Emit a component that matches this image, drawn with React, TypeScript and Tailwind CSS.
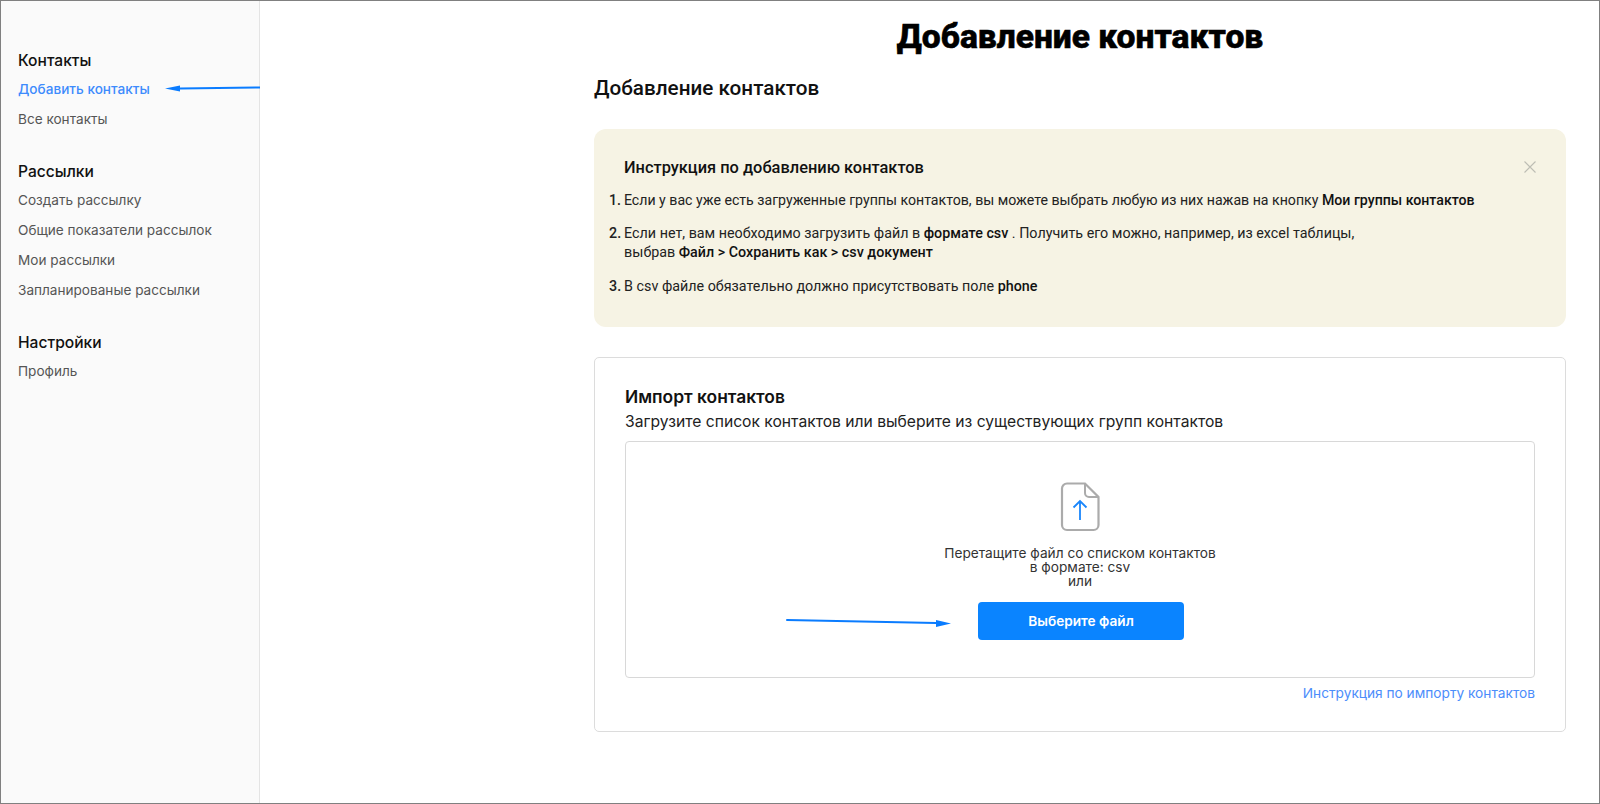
export default function App() {
  const groups = [
    { title: "Контакты", items: ["Добавить контакты", "Все контакты"] },
    { title: "Рассылки", items: ["Создать рассылку", "Общие показатели рассылок", "Мои рассылки", "Запланированые рассылки"] },
    { title: "Настройки", items: ["Профиль"] },
  ];
  return (
    <div className="relative w-[1600px] h-[804px] overflow-hidden bg-white border border-[#808080] flex font-['Inter','Noto_Sans',sans-serif] text-[#111]">
      <aside className="w-[259px] shrink-0 bg-[#fafafa] border-r border-[#e4e4e4] pl-[17px] pt-[50px] flex flex-col gap-[28px]">
        {groups.map((g) => (
          <div key={g.title} className="flex flex-col">
            <div className="text-[15.6px] leading-[20px] font-medium text-[#111] mb-[4px]">{g.title}</div>
            {g.items.map((it) => (
              <div key={it} className={"text-[13.6px] leading-[29.7px] " + (it === "Добавить контакты" ? "text-[#3d8bfd] font-medium" : "text-[#555]")}>
                {it}
              </div>
            ))}
          </div>
        ))}
      </aside>

      <main className="flex-1 pl-[334px] pr-[33px] flex flex-col">
        <h1 className="text-center font-['Roboto',sans-serif] font-extrabold text-[33.6px] leading-[40px] mt-[16px] text-black [-webkit-text-stroke:0.6px_black]">
          Добавление контактов
        </h1>
        <h2 className="font-['Roboto',sans-serif] font-medium text-[20.7px] leading-[24px] mt-[19px] text-[#111]">Добавление контактов</h2>

        <section className="relative mt-[29px] h-[198px] bg-[#f6f3e4] rounded-[12px] pl-[30px] pr-[30px] pt-[29px]">
          <button className="absolute right-[29px] top-[31px] text-[#bdbdb4]">
            <svg width="14" height="14" viewBox="0 0 14 14" fill="none" stroke="currentColor" strokeWidth="1.1">
              <path d="M1.5 1.5 L12.5 12.5 M12.5 1.5 L1.5 12.5" />
            </svg>
          </button>
          <div className="font-['Roboto',sans-serif] font-medium text-[16.4px] leading-[20px] text-[#111]">Инструкция по добавлению контактов</div>
          <ol className="font-['Roboto',sans-serif] text-[14.15px] text-[#222] mt-[13px] -ml-[15px] list-none">
            <li className="leading-[19px] flex gap-[3px]">
              <span className="font-medium">1.</span>
              <span>
                Если у вас уже есть загруженные группы контактов, вы можете выбрать любую из них нажав на кнопку <b className="font-medium text-[#111]">Мои группы контактов</b>
              </span>
            </li>
            <li className="leading-[19px] flex gap-[3px] mt-[14px] text-[14.3px]">
              <span className="font-medium">2.</span>
              <span>
                Если нет, вам необходимо загрузить файл в <b className="font-medium text-[#111]">формате csv</b> . Получить его можно, например, из excel таблицы,
                <br />
                выбрав <b className="font-medium text-[#111]">Файл &gt; Сохранить как &gt; csv документ</b>
              </span>
            </li>
            <li className="leading-[19px] flex gap-[3px] mt-[15px] text-[14.3px]">
              <span className="font-medium">3.</span>
              <span>
                В csv файле обязательно должно присутствовать поле <b className="font-medium text-[#111]">phone</b>
              </span>
            </li>
          </ol>
        </section>

        <section className="mt-[30px] h-[375px] bg-white border border-[#dcdcdc] rounded-[5px] px-[30px] pt-[28px] flex flex-col">
          <div className="text-[17.4px] leading-[22px] font-semibold text-[#111]">Импорт контактов</div>
          <div className="text-[15.65px] leading-[20px] mt-[4px] text-[#222]">Загрузите список контактов или выберите из существующих групп контактов</div>
          <div className="mt-[9px] h-[237px] border border-[#d8d8d8] rounded-[4px] flex flex-col items-center pt-[40px]">
            <svg width="40" height="50" viewBox="0 0 40 50" fill="none">
              <path d="M7 1.5 H25 L38.5 15 V43 a5 5 0 0 1 -5 5 H7 a5 5 0 0 1 -5 -5 V6.5 a5 5 0 0 1 5 -5 Z" stroke="#ababab" strokeWidth="2.2" />
              <path d="M25 1.5 V11 a4 4 0 0 0 4 4 H38.5" stroke="#ababab" strokeWidth="2" />
              <path d="M20 38 V19 M13.5 25.5 L20 19 L26.5 25.5" stroke="#1a86fb" strokeWidth="1.8" />
            </svg>
            <div className="mt-[14px] text-[13.7px] leading-[14px] text-center text-[#333]">
              Перетащите файл со списком контактов
              <br />в формате: csv
              <br />или
            </div>
            <button className="mt-[14px] ml-[2px] w-[206px] h-[38px] rounded-[4px] bg-[#0a84ff] text-white text-[13.65px] font-semibold">Выберите файл</button>
          </div>
          <div className="mt-[6px] text-right text-[13.7px] leading-[18px] text-[#4c8dfb]">Инструкция по импорту контактов</div>
        </section>
      </main>

      <svg className="absolute left-0 top-0 pointer-events-none" width="1600" height="804" fill="none">
        <path d="M179 87.5 L259 86.5" stroke="#0a7cff" strokeWidth="2" />
        <path d="M164 87.5 L179 84.5 L179 90.5 Z" fill="#0a7cff" />
        <path d="M786 619 L935 622" stroke="#0a7cff" strokeWidth="2" strokeLinecap="round" />
        <path d="M950 622.5 L935 619 L935 626 Z" fill="#0a7cff" />
      </svg>
    </div>
  );
}
